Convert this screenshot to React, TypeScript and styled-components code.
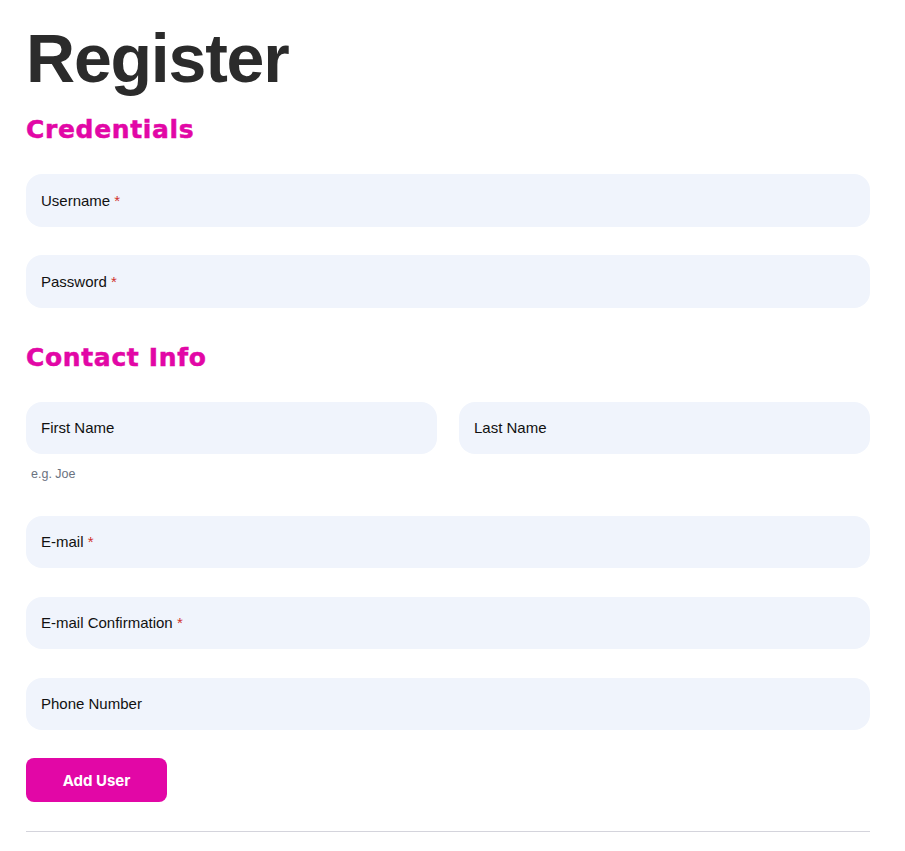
import styled, { createGlobalStyle } from "styled-components";

const GlobalStyle = createGlobalStyle`
	body {
		margin: 0;
		background: #ffffff;
		font-family: "Liberation Sans", Arial, sans-serif;
	}
`;

const credentialFields = [
	{ label: "Username", required: true },
	{ label: "Password", required: true },
];

const contactFields = [
	{ label: "E-mail", required: true },
	{ label: "E-mail Confirmation", required: true },
	{ label: "Phone Number", required: false },
];

const Field = ({ label, required, hint }: { label: string; required?: boolean; hint?: string }) => (
	<FieldWrap>
		<FieldBox>
			<FieldLabel>
				{label}
				{required && <Star> *</Star>}
			</FieldLabel>
		</FieldBox>
		{hint && <Hint>{hint}</Hint>}
	</FieldWrap>
);

const App = () => {
	return (
		<Page>
			<GlobalStyle />
			<Title>Register</Title>

			<Section>
				<SectionTitle>Credentials</SectionTitle>
				<Fields>
					{credentialFields.map((field) => (
						<Field key={field.label} label={field.label} required={field.required} />
					))}
				</Fields>
			</Section>

			<Section>
				<SectionTitle>Contact Info</SectionTitle>
				<Fields>
					<Row>
						<Field label="First Name" hint="e.g. Joe" />
						<Field label="Last Name" />
					</Row>
					{contactFields.map((field) => (
						<Field key={field.label} label={field.label} required={field.required} />
					))}
				</Fields>
			</Section>

			<Button type="button">Add User</Button>
			<Divider />
		</Page>
	);
};

const Page = styled.div`
	padding: 22px 35px 20px 26px;
	display: flex;
	flex-direction: column;
`;

const Title = styled.h1`
	margin: 0;
	font-size: 68px;
	line-height: 72px;
	font-weight: 700;
	letter-spacing: -1.2px;
	color: #2b2b2b;
`;

const Section = styled.section`
	display: flex;
	flex-direction: column;
	margin-top: 21px;

	& + & {
		margin-top: 35px;
	}
`;

const SectionTitle = styled.h2`
	margin: 0 0 29px;
	font-family: "DejaVu Sans", Verdana, sans-serif;
	font-size: 25px;
	line-height: 30px;
	font-weight: 700;
	letter-spacing: 0.65px;
	-webkit-text-stroke: 0.5px #e207a6;
	color: #e207a6;
`;

const Fields = styled.div`
	display: flex;
	flex-direction: column;
	gap: 28.5px;
`;

const Row = styled.div`
	display: grid;
	grid-template-columns: 1fr 1fr;
	gap: 22px;
	align-items: start;
`;

const FieldWrap = styled.div`
	display: flex;
	flex-direction: column;
`;

const FieldBox = styled.div`
	height: 52.5px;
	box-sizing: border-box;
	border-radius: 16px;
	background: #f0f4fc;
	padding: 0 15px;
	display: flex;
	align-items: center;
`;

const FieldLabel = styled.label`
	font-size: 15px;
	color: #111111;
`;

const Star = styled.span`
	color: #d0312d;
`;

const Hint = styled.div`
	margin: 11px 0 4px;
	padding-left: 5px;
	font-size: 12.5px;
	line-height: 18px;
	color: #6b7280;
`;

const Button = styled.button`
	margin-top: 28px;
	align-self: flex-start;
	width: 141px;
	height: 44px;
	border: none;
	border-radius: 8px;
	background: #e207a6;
	color: #ffffff;
	font-family: Inter, "Liberation Sans", sans-serif;
	font-size: 15px;
	font-weight: 700;
	cursor: pointer;
`;

const Divider = styled.hr`
	margin: 29px 0 0;
	border: none;
	border-top: 1px solid #d4d4dc;
`;

export default App;
